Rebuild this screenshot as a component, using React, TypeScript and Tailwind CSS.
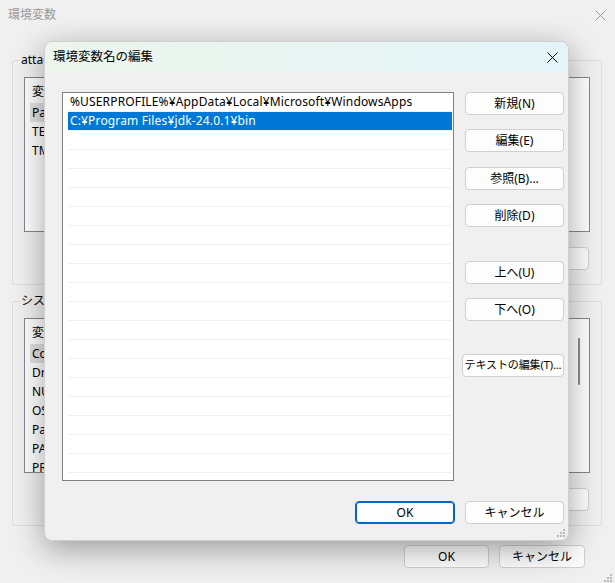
import React from 'react';

const FONT = "font-['Noto_Sans','Noto_Sans_CJK_JP',sans-serif]";

function XIcon({ className = '' }: { className?: string }) {
  return (
    <svg width="11" height="11" viewBox="0 0 11 11" className={className}>
      <path d="M0.5 0.5 L10.5 10.5 M10.5 0.5 L0.5 10.5" stroke="currentColor" strokeWidth="1" fill="none" />
    </svg>
  );
}

function Grip({ className = '' }: { className?: string }) {
  const dots = [
    [6, 0],
    [3, 3],
    [6, 3],
    [0, 6],
    [3, 6],
    [6, 6],
  ];
  return (
    <svg width="8" height="8" viewBox="0 0 8 8" className={className}>
      {dots.map(([x, y], i) => (
        <rect key={i} x={x} y={y} width="2" height="2" fill="#b8b8b8" />
      ))}
    </svg>
  );
}

function Btn({ label = '', small, className = '' }: { label?: string; small?: boolean; className?: string }) {
  return (
    <div
      className={`flex h-[23px] items-center justify-center whitespace-nowrap rounded-[4px] border border-[#d0d0d0] bg-[#fdfdfd] text-black ${
        small ? 'text-[11px] tracking-[-0.1px]' : 'text-[12px]'
      } ${className}`}
    >
      {label}
    </div>
  );
}

type GroupProps = {
  label: string;
  rows: string[];
  selected: number;
  scroll?: boolean;
  className?: string;
};

// background window group box; most of it sits under the edit dialog
function Group({ label, rows, selected, scroll, className = '' }: GroupProps) {
  return (
    <div className={`relative h-[225px] w-[590px] rounded-[2px] border border-[#dcdcdc] ${className}`}>
      <span className="absolute left-[7px] top-[-10px] bg-[#f0f0f0] px-[1px] leading-[18px]">{label}</span>
      <div className="pl-[11px] pr-[11px] pt-[16px]">
        <div className="relative h-[155px] overflow-hidden border border-[#828790] bg-white">
          <div className="flex h-[25px] items-center pl-[7px] pt-[2px]">
            <span>変数</span>
          </div>
          <div className="pl-[5px]">
            {rows.map((r, i) => (
              <div
                key={r}
                className={`flex h-[19px] w-[300px] items-center pl-[2px] ${i === selected ? 'bg-[#e2e2e2]' : ''}`}
              >
                {r}
              </div>
            ))}
          </div>
          {scroll && <div className="absolute right-[9px] top-[19px] h-[47px] w-[2px] rounded-full bg-[#8a8a8a]" />}
        </div>
      </div>
      <div className="mr-[12px] mt-[15px] flex justify-end gap-[10px]">
        <Btn className="w-[85px]" />
        <Btn className="w-[85px]" />
        <Btn className="w-[85px]" />
      </div>
    </div>
  );
}

export default function App() {
  const paths = [
    '%USERPROFILE%¥AppData¥Local¥Microsoft¥WindowsApps',
    'C:¥Program Files¥jdk-24.0.1¥bin',
    ...Array.from({ length: 19 }, () => ''),
  ];

  return (
    <div className={`relative h-[583px] w-[615px] overflow-hidden bg-[#f0f0f0] text-[12px] text-black ${FONT}`}>
      <div className="flex h-[30px] items-center justify-between pl-[8px] pr-[9px] text-[#9a9a9a]">
        <span>環境変数</span>
        <XIcon />
      </div>

      <div className="px-[12px] pt-[30px]">
        <Group label="attac" rows={['Path', 'TEMP', 'TMP']} selected={0} />
        <Group
          className="mt-[16px]"
          label="システ"
          rows={['ComSpec', 'DriverData', 'NUMBER_OF_PROCESSORS', 'OS', 'Path', 'PATHEXT', 'PROCESSOR_ARCHITECTURE']}
          selected={0}
          scroll
        />
        <div className="mt-[19px] flex justify-end gap-[10px] pr-[18px]">
          <Btn label="OK" className="w-[85px]" />
          <Btn label="キャンセル" className="w-[86px]" />
        </div>
      </div>
      <Grip className="absolute bottom-[1px] right-[3px]" />

      <div className="absolute left-[44px] top-[41px] flex h-[500px] w-[525px] flex-col overflow-hidden rounded-[8px] border border-[#cfcfcf] bg-[#f0f0f0] shadow-[0_8px_32px_rgba(0,0,0,0.36)]">
        <div className="flex h-[30px] shrink-0 items-center justify-between bg-linear-to-r from-[#edf5ec] to-[#e4f4f8] pl-[8px] pr-[10px]">
          <span className="text-[12.5px]">環境変数名の編集</span>
          <XIcon className="text-black" />
        </div>

        <div className="flex pl-[17px] pt-[20px]">
          <div className="h-[389px] w-[392px] overflow-hidden border border-[#7f7f87] bg-white pl-[5px] pr-[1px]">
            {paths.map((p, i) => (
              <div
                key={i}
                className={`flex h-[19px] items-center border-b border-[#f0f0f0] pl-[2px] tracking-[0.15px] ${
                  i === 1 ? 'bg-[#0078d7] text-white' : ''
                }`}
              >
                {p}
              </div>
            ))}
          </div>

          <div className="ml-[11px] flex w-[99px] flex-col">
            <Btn label="新規(N)" />
            <Btn label="編集(E)" className="mt-[14px]" />
            <Btn label="参照(B)..." className="mt-[15px]" />
            <Btn label="削除(D)" className="mt-[14px]" />
            <Btn label="上へ(U)" className="mt-[34px]" />
            <Btn label="下へ(O)" className="mt-[14px]" />
            <Btn label="テキストの編集(T)..." small className="-ml-[3px] mt-[33px]" />
          </div>
        </div>

        <div className="mt-[20px] flex justify-end gap-[10px] pr-[4px]">
          <div className="flex h-[23px] w-[100px] items-center justify-center rounded-[4px] border border-[#0067c0] bg-[#fdfdfd] shadow-[inset_0_0_0_1px_#0067c0]">
            OK
          </div>
          <Btn label="キャンセル" className="w-[99px]" />
        </div>
        <Grip className="absolute bottom-[3px] right-[3px]" />
      </div>
    </div>
  );
}
